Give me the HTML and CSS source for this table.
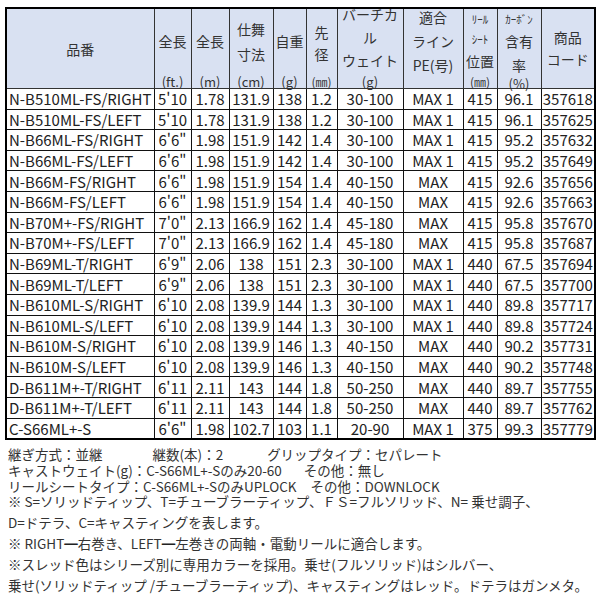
FILE: index.html
```html
<!DOCTYPE html>
<html lang="ja">
<head>
<meta charset="utf-8">
<link rel="stylesheet" href="styles.css">
</head>
<body>
<table class="spec">
  <colgroup>
    <col class="w-name"><col class="w-ft"><col class="w-m"><col class="w-cm"><col class="w-g"><col class="w-mm"><col class="w-vw"><col class="w-pe"><col class="w-reel"><col class="w-cb"><col class="w-code">
  </colgroup>
  <thead>
    <tr>
      <th><div class="h h-name"><div class="l">品番</div></div></th>
      <th><div class="h h-ft"><div class="l">全長</div><div class="u">(ft.)</div></div></th>
      <th><div class="h h-ft"><div class="l">全長</div><div class="u">(m)</div></div></th>
      <th><div class="h h-cm"><div class="l">仕舞</div><div class="l">寸法</div><div class="u">(cm)</div></div></th>
      <th><div class="h h-ft"><div class="l">自重</div><div class="u">(g)</div></div></th>
      <th><div class="h h-dia"><div class="l">先</div><div class="l">径</div><div class="u sm">(㎜)</div></div></th>
      <th><div class="h h-vw"><div class="l">バーチカ</div><div class="l">ル</div><div class="l">ウェイト</div><div class="u">(g)</div></div></th>
      <th><div class="h h-pe"><div class="l">適合</div><div class="l">ライン</div><div class="l">PE(号)</div></div></th>
      <th><div class="h h-reel"><div class="l tiny">ﾘｰﾙ</div><div class="l tiny">ｼｰﾄ</div><div class="l">位置</div><div class="u sm">(㎜)</div></div></th>
      <th><div class="h h-reel"><div class="l tiny">ｶｰﾎﾞﾝ</div><div class="l">含有</div><div class="l">率</div><div class="u">(%)</div></div></th>
      <th><div class="h h-code"><div class="l">商品</div><div class="l">コード</div></div></th>
    </tr>
  </thead>
  <tbody>
    <tr><td>N-B510ML-FS/RIGHT</td><td>5'10</td><td>1.78</td><td>131.9</td><td>138</td><td>1.2</td><td>30-100</td><td>MAX 1</td><td>415</td><td>96.1</td><td>357618</td></tr>
    <tr><td>N-B510ML-FS/LEFT</td><td>5'10</td><td>1.78</td><td>131.9</td><td>138</td><td>1.2</td><td>30-100</td><td>MAX 1</td><td>415</td><td>96.1</td><td>357625</td></tr>
    <tr><td>N-B66ML-FS/RIGHT</td><td>6'6"</td><td>1.98</td><td>151.9</td><td>142</td><td>1.4</td><td>30-100</td><td>MAX 1</td><td>415</td><td>95.2</td><td>357632</td></tr>
    <tr><td>N-B66ML-FS/LEFT</td><td>6'6"</td><td>1.98</td><td>151.9</td><td>142</td><td>1.4</td><td>30-100</td><td>MAX 1</td><td>415</td><td>95.2</td><td>357649</td></tr>
    <tr><td>N-B66M-FS/RIGHT</td><td>6'6"</td><td>1.98</td><td>151.9</td><td>154</td><td>1.4</td><td>40-150</td><td>MAX</td><td>415</td><td>92.6</td><td>357656</td></tr>
    <tr><td>N-B66M-FS/LEFT</td><td>6'6"</td><td>1.98</td><td>151.9</td><td>154</td><td>1.4</td><td>40-150</td><td>MAX</td><td>415</td><td>92.6</td><td>357663</td></tr>
    <tr><td>N-B70M+-FS/RIGHT</td><td>7'0"</td><td>2.13</td><td>166.9</td><td>162</td><td>1.4</td><td>45-180</td><td>MAX</td><td>415</td><td>95.8</td><td>357670</td></tr>
    <tr><td>N-B70M+-FS/LEFT</td><td>7'0"</td><td>2.13</td><td>166.9</td><td>162</td><td>1.4</td><td>45-180</td><td>MAX</td><td>415</td><td>95.8</td><td>357687</td></tr>
    <tr><td>N-B69ML-T/RIGHT</td><td>6'9"</td><td>2.06</td><td>138</td><td>151</td><td>2.3</td><td>30-100</td><td>MAX 1</td><td>440</td><td>67.5</td><td>357694</td></tr>
    <tr><td>N-B69ML-T/LEFT</td><td>6'9"</td><td>2.06</td><td>138</td><td>151</td><td>2.3</td><td>30-100</td><td>MAX 1</td><td>440</td><td>67.5</td><td>357700</td></tr>
    <tr><td>N-B610ML-S/RIGHT</td><td>6'10</td><td>2.08</td><td>139.9</td><td>144</td><td>1.3</td><td>30-100</td><td>MAX 1</td><td>440</td><td>89.8</td><td>357717</td></tr>
    <tr><td>N-B610ML-S/LEFT</td><td>6'10</td><td>2.08</td><td>139.9</td><td>144</td><td>1.3</td><td>30-100</td><td>MAX 1</td><td>440</td><td>89.8</td><td>357724</td></tr>
    <tr><td>N-B610M-S/RIGHT</td><td>6'10</td><td>2.08</td><td>139.9</td><td>146</td><td>1.3</td><td>40-150</td><td>MAX</td><td>440</td><td>90.2</td><td>357731</td></tr>
    <tr><td>N-B610M-S/LEFT</td><td>6'10</td><td>2.08</td><td>139.9</td><td>146</td><td>1.3</td><td>40-150</td><td>MAX</td><td>440</td><td>90.2</td><td>357748</td></tr>
    <tr><td>D-B611M+-T/RIGHT</td><td>6'11</td><td>2.11</td><td>143</td><td>144</td><td>1.8</td><td>50-250</td><td>MAX</td><td>440</td><td>89.7</td><td>357755</td></tr>
    <tr><td>D-B611M+-T/LEFT</td><td>6'11</td><td>2.11</td><td>143</td><td>144</td><td>1.8</td><td>50-250</td><td>MAX</td><td>440</td><td>89.7</td><td>357762</td></tr>
    <tr><td>C-S66ML+-S</td><td>6'6"</td><td>1.98</td><td>102.7</td><td>103</td><td>1.1</td><td>20-90</td><td>MAX 1</td><td>375</td><td>99.3</td><td>357779</td></tr>
  </tbody>
</table>
<div class="notes">
  <div class="tight">
    <p>継ぎ方式：並継<span class="gap1">継数(本)：2</span><span class="gap2">グリップタイプ：セパレート</span></p>
    <p>キャストウェイト(g)：C-S66ML+-Sのみ20-60<span class="gap3">その他：無し</span></p>
    <p>リールシートタイプ：C-S66ML+-SのみUPLOCK<span class="gap4">その他：DOWNLOCK</span></p>
  </div>
  <div class="loose">
    <p>※ S=ソリッドティップ、T=チューブラーティップ、ＦＳ=フルソリッド、N= 乗せ調子、</p>
    <p>D=ドテラ、C=キャスティングを表します。</p>
    <p>※ RIGHT<b class="bar">━</b>右巻き、LEFT<b class="bar">━</b>左巻きの両軸・電動リールに適合します。</p>
    <p>※スレッド色はシリーズ別に専用カラーを採用。乗せ(フルソリッド)はシルバー、</p>
    <p>乗せ(ソリッドティップ /チューブラーティップ)、キャスティングはレッド。ドテラはガンメタ。</p>
  </div>
</div>
</body>
</html>
```
FILE: styles.css
```css
html, body {
  margin: 0;
  padding: 0;
  background: #ffffff;
}
body {
  padding: 7px 0 0 5px;
  font-family: "Noto Sans CJK JP", "Noto Sans", sans-serif;
  color: #222;
}
.spec {
  border-collapse: collapse;
  table-layout: fixed;
  width: 589px;
  border: 2px solid #000;
  font-size: 15px;
}
.w-name { width: 148px; }
.w-ft { width: 37px; }
.w-m { width: 38px; }
.w-cm { width: 44px; }
.w-g { width: 33px; }
.w-mm { width: 31px; }
.w-vw { width: 66px; }
.w-pe { width: 60px; }
.w-reel { width: 34px; }
.w-cb { width: 44px; }
.w-code { width: 54px; }

.spec th {
  background: #d9e1f2;
  border: 1px solid #333;
  padding: 0;
  font-weight: normal;
  color: #333;
  font-size: 14px;
  vertical-align: top;
  height: 79px;
}
.h {
  height: 79px;
  display: flex;
  flex-direction: column;
  align-items: center;
  box-sizing: border-box;
  white-space: nowrap;
}
.h .l { line-height: 22px; }
.h .u { margin-top: auto; line-height: 13px; font-size: 13px; }
.h .sm { font-size: 12px; }
.h .tiny { font-size: 11px; letter-spacing: 0; }
.h-name { justify-content: center; }
.h-ft { padding-top: 21px; }
.h-cm { padding-top: 8px; }
.h-cm .l { line-height: 25px; }
.h-dia { padding-top: 12px; }
.h-vw { padding-top: 0; margin-top: -6px; height: 85px; }
.h-vw .l { line-height: 23px; }
.h-pe { padding-top: 0; margin-top: -4px; }
.h-pe .l { line-height: 24px; }
.h-reel { padding-top: 0; }
.h-reel .l { line-height: 24px; }
.h-reel .tiny { line-height: 20px; }
.h-code { padding-top: 17px; }

.spec td {
  border: 1px solid #111;
  padding: 0;
  height: 19.6px;
  line-height: 19px;
  text-align: center;
  white-space: nowrap;
  overflow: hidden;
}
.spec td:first-child {
  text-align: left;
  padding-left: 2px;
}

.notes {
  font-size: 13.5px;
  color: #333;
  padding-left: 3px;
}
.notes p { margin: 0; white-space: nowrap; }
.tight { padding-top: 6px; line-height: 16px; }
.loose { line-height: 21px; margin-top: -3px; }
.gap1 { margin-left: 50px; }
.gap2 { margin-left: 44px; }
.gap3 { margin-left: 22px; }
.gap4 { margin-left: 14px; }
.bar { font-weight: bold; color: #222; }
```
